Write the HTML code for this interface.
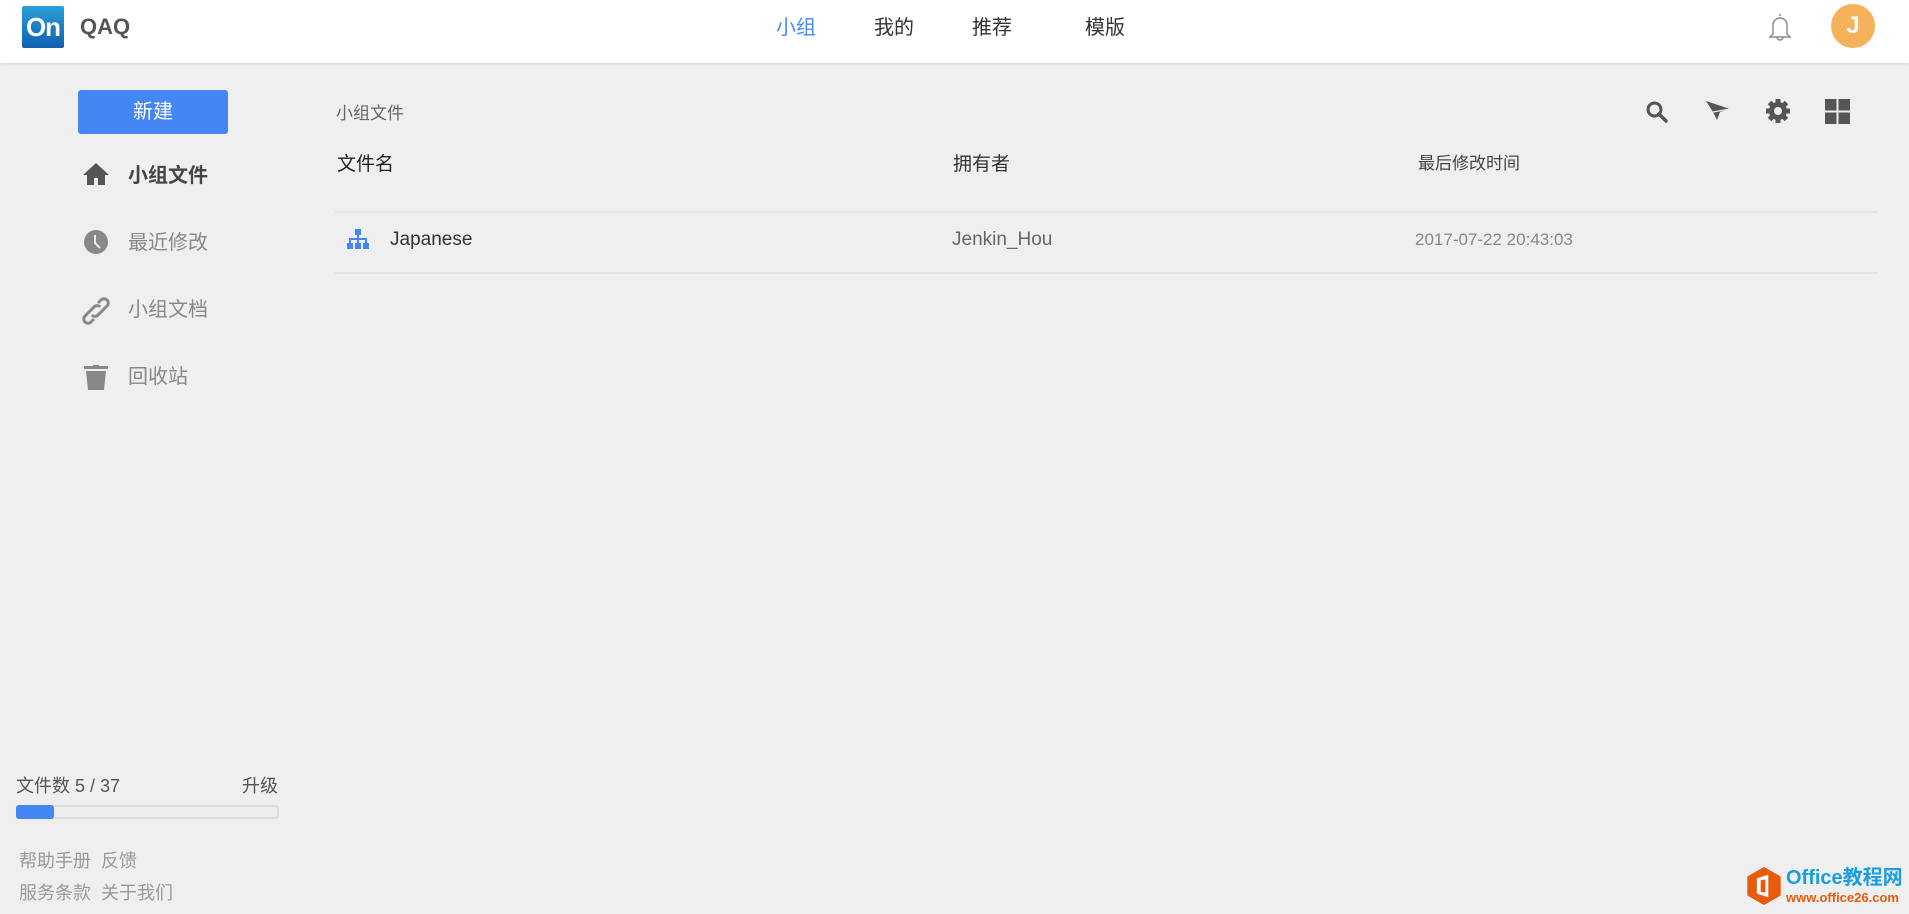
<!DOCTYPE html>
<html><head><meta charset="utf-8"><style>
*{margin:0;padding:0;box-sizing:border-box}
body{width:1909px;height:914px;overflow:hidden;background:#efefef;font-family:"Liberation Sans","Noto Sans CJK SC",sans-serif;position:relative;color:#333}
.a{position:absolute;white-space:nowrap}
.hdr{position:absolute;left:0;top:0;width:1909px;height:63px;background:#fff;box-shadow:0 1px 3px rgba(0,0,0,.12)}
.nav{font-size:20px;top:11px;color:#333}
.menu{font-size:20px;color:#888;left:128px}
.line{position:absolute;left:335px;width:1543px;height:2px;background:#e2e2e8}
</style></head><body>
<div class="hdr">
  <div class="a" style="left:22px;top:6px;width:42px;height:42px;border-radius:2px;background:linear-gradient(#2aa0d8,#1060b0);color:#fff;font-weight:bold;font-size:26px;line-height:42px;text-align:center;letter-spacing:-1px">On</div>
  <div class="a" style="left:80px;top:14px;font-size:22px;font-weight:bold;color:#555">QAQ</div>
  <div class="a nav" style="left:776px;color:#4a8af4">小组</div>
  <div class="a nav" style="left:874px">我的</div>
  <div class="a nav" style="left:972px">推荐</div>
  <div class="a nav" style="left:1085px">模版</div>
  <svg class="a" style="left:1767px;top:12px" width="26" height="30" viewBox="0 0 26 30"><path d="M13 2v2M6 22V13a7 7 0 0 1 14 0v9l3 3H3z M10 25a3 3 0 0 0 6 0" fill="none" stroke="#888" stroke-width="1.4"/></svg>
  <div class="a" style="left:1831px;top:4px;width:44px;height:44px;border-radius:50%;background:#f5b25a;color:#fff;font-size:24px;font-weight:bold;line-height:44px;text-align:center">J</div>
</div>

<div class="a" style="left:78px;top:90px;width:150px;height:44px;background:#4386f4;border-radius:3px;color:#fff;font-size:20px;line-height:44px;text-align:center">新建</div>

<svg class="a" style="left:82px;top:162px" width="28" height="24" viewBox="0 0 28 24"><path d="M14 1L1 13h4v10h7v-7h4v7h7V13h4z" fill="#555"/></svg>
<div class="a" style="left:128px;top:159px;font-size:20px;font-weight:bold;color:#444">小组文件</div>

<svg class="a" style="left:83px;top:229px" width="26" height="26" viewBox="0 0 26 26"><circle cx="13" cy="13" r="12" fill="#888"/><path d="M12 6v8l5 5" stroke="#eee" stroke-width="2" fill="none"/></svg>
<div class="a menu" style="top:226px">最近修改</div>

<svg class="a" style="left:82px;top:297px" width="28" height="28" viewBox="0 0 28 28"><g fill="none" stroke="#888" stroke-width="3"><path d="M16 6l3-3a4 4 0 0 1 6 6l-9 9a4 4 0 0 1-6 0"/><path d="M12 22l-3 3a4 4 0 0 1-6-6l9-9a4 4 0 0 1 6 0"/></g></svg>
<div class="a menu" style="top:293px">小组文档</div>

<svg class="a" style="left:83px;top:365px" width="26" height="26" viewBox="0 0 26 26"><rect x="1" y="1" width="24" height="3" fill="#888"/><rect x="10" y="0" width="6" height="2" fill="#888"/><path d="M3 6h20l-2 19H5z" fill="#888"/></svg>
<div class="a menu" style="top:360px">回收站</div>

<div class="a" style="left:336px;top:99px;font-size:17px;color:#666">小组文件</div>
<svg class="a" style="left:1645px;top:100px" width="24" height="24" viewBox="0 0 24 24"><circle cx="9.5" cy="9.5" r="6.5" fill="none" stroke="#555" stroke-width="3"/><path d="M14 14l7 7" stroke="#555" stroke-width="3.5" stroke-linecap="round"/></svg>
<svg class="a" style="left:1705px;top:100px" width="26" height="22" viewBox="0 0 26 22"><path d="M1 1l24 8-10 3-3 8-4-8z" fill="#555"/><path d="M8 12l17-3" stroke="#efefef" stroke-width="1.2"/></svg>
<svg class="a" style="left:1765px;top:98px" width="26" height="26" viewBox="0 0 26 26"><g fill="#555"><circle cx="13" cy="13" r="9"/><g stroke="#555" stroke-width="5"><path d="M13 1v24M1 13h24M4.5 4.5l17 17M21.5 4.5l-17 17" stroke-dasharray="5 14 5"/></g></g><circle cx="13" cy="13" r="4" fill="#efefef"/></svg>
<svg class="a" style="left:1825px;top:99px" width="25" height="25" viewBox="0 0 25 25"><g fill="#555"><rect x="0" y="0" width="11.5" height="11.5"/><rect x="13.5" y="0" width="11.5" height="11.5"/><rect x="0" y="13.5" width="11.5" height="11.5"/><rect x="13.5" y="13.5" width="11.5" height="11.5"/></g></svg>

<div class="a" style="left:337px;top:149px;font-size:19px;color:#222">文件名</div>
<div class="a" style="left:953px;top:149px;font-size:19px;color:#333">拥有者</div>
<div class="a" style="left:1418px;top:149px;font-size:17px;color:#444">最后修改时间</div>
<div class="line" style="top:211px"></div>
<svg class="a" style="left:347px;top:229px" width="22" height="22" viewBox="0 0 22 22"><g fill="#4386f4"><rect x="8" y="0" width="6" height="6"/><rect x="10" y="6" width="2" height="4"/><rect x="2" y="9" width="18" height="2"/><rect x="2" y="11" width="2" height="3"/><rect x="18" y="11" width="2" height="3"/><rect x="10" y="11" width="2" height="3"/><rect x="0" y="14" width="6" height="6"/><rect x="8" y="14" width="6" height="6"/><rect x="16" y="14" width="6" height="6"/></g></svg>
<div class="a" style="left:390px;top:229px;font-size:19px;color:#333">Japanese</div>
<div class="a" style="left:952px;top:229px;font-size:19px;color:#666">Jenkin_Hou</div>
<div class="a" style="left:1415px;top:230px;font-size:17px;color:#888">2017-07-22 20:43:03</div>
<div class="line" style="top:272px"></div>

<div class="a" style="left:16px;top:772px;font-size:18px;color:#555">文件数 5 / 37</div>
<div class="a" style="left:242px;top:772px;font-size:18px;color:#555">升级</div>
<div class="a" style="left:16px;top:805px;width:263px;height:14px;border-radius:3px;background:#eee;border:2px solid #ddd"></div>
<div class="a" style="left:16px;top:805px;width:38px;height:14px;border-radius:3px;background:#4386f4"></div>
<div class="a" style="left:19px;top:847px;font-size:18px;color:#999">帮助手册&nbsp; 反馈</div>
<div class="a" style="left:19px;top:879px;font-size:18px;color:#999">服务条款&nbsp; 关于我们</div>

<svg class="a" style="left:1746px;top:866px" width="36" height="40" viewBox="0 0 37 42"><path d="M18.5 1L36 11v20L18.5 41 1 31V11z" fill="#e85a0c"/><path d="M11 13l12-4v24l-12-4z M15 15v12l5 1V14z" fill="#fff" fill-rule="evenodd"/></svg>
<div class="a" style="left:1786px;top:866px;font-size:20px;font-weight:bold;color:#1a9ee0;line-height:24px">Office教程网</div>
<div class="a" style="left:1786px;top:890px;font-size:13px;font-weight:bold;color:#e85a0c;line-height:16px">www.office26.com</div>
</body></html>
